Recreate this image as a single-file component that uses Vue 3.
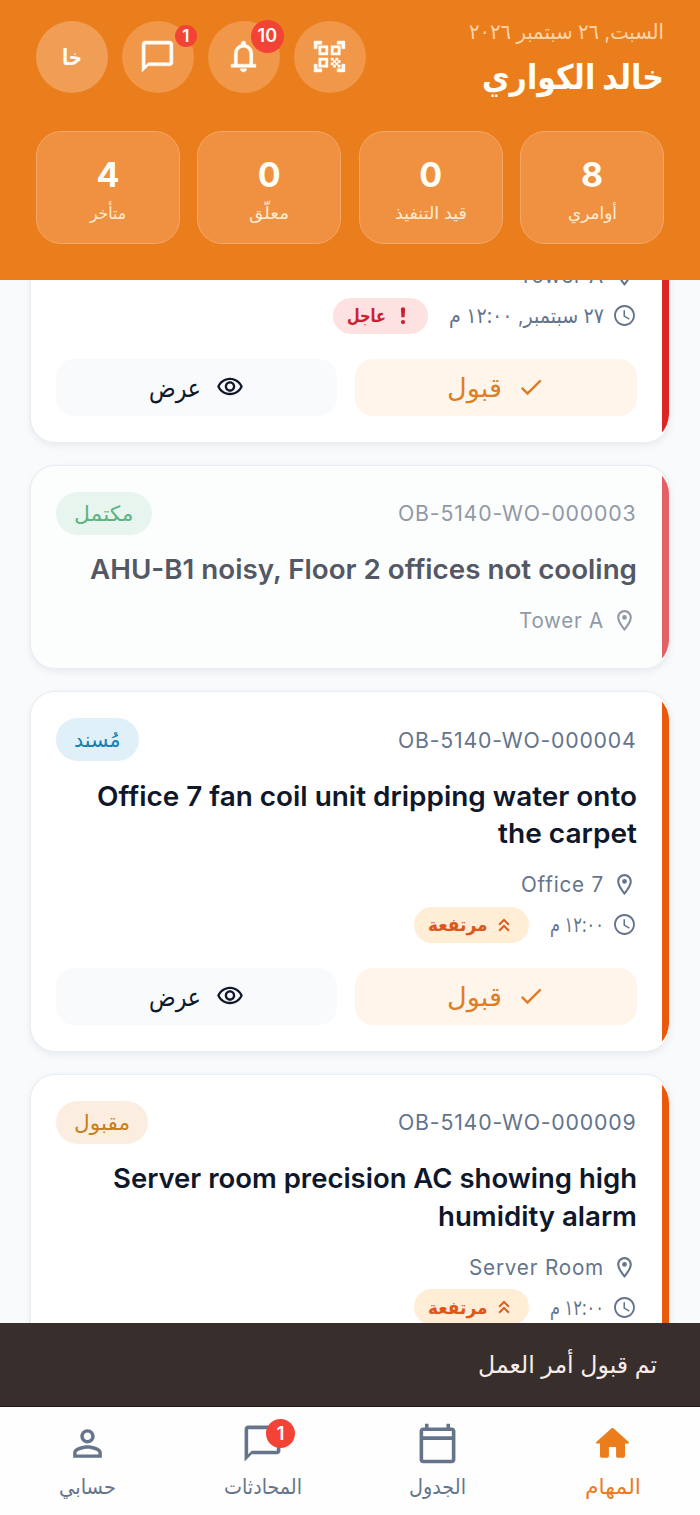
<script setup>
const icons = {
  qr: 'M9.5 6.5v3h-3v-3h3M11 5H5v6h6V5zm-1.5 9.5v3h-3v-3h3M11 13H5v6h6v-6zm6.5-6.5v3h-3v-3h3M19 5h-6v6h6V5zm-6 8h1.5v1.5H13V13zm1.5 1.5H16V16h-1.5v-1.5zM16 13h1.5v1.5H16V13zm-3 3h1.5v1.5H13V16zm1.5 1.5H16V19h-1.5v-1.5zM16 16h1.5v1.5H16V16zm1.5-1.5H19V16h-1.5v-1.5zm0 3H19V19h-1.5v-1.5zM22 7h-2V4h-3V2h5v5zm0 15v-5h-2v3h-3v2h5zM2 22h5v-2H4v-3H2v5zM2 2v5h2V4h3V2H2z',
  bell: 'M4 19v-2h2v-7q0-2.075 1.25-3.688T10.5 4.2v-.7q0-.625.438-1.062T12 2t1.063.438T13.5 3.5v.7q2 .5 3.25 2.113T18 10v7h2v2zm8 3q-.825 0-1.412-.587T10 20h4q0 .825-.587 1.413T12 22m-4-5h8v-7q0-1.65-1.175-2.825T12 6T9.175 7.175T8 10z',
  chat: 'M20 2H4c-1.1 0-2 .9-2 2v18l4-4h14c1.1 0 2-.9 2-2V4c0-1.1-.9-2-2-2zm0 14H6l-2 2V4h16v12z',
  pin: 'M12 2C8.13 2 5 5.13 5 9c0 5.25 7 13 7 13s7-7.75 7-13c0-3.87-3.13-7-7-7zM7 9c0-2.76 2.24-5 5-5s5 2.24 5 5c0 2.88-2.88 7.19-5 9.88C9.92 16.21 7 11.85 7 9zM12 6.7a2.3 2.3 0 1 0 0 4.6a2.3 2.3 0 1 0 0-4.6z',
  clock: 'M11.99 2C6.47 2 2 6.48 2 12s4.47 10 9.99 10C17.52 22 22 17.52 22 12S17.52 2 11.99 2zM12 20.2c-4.53 0-8.2-3.67-8.2-8.2S7.47 3.8 12 3.8s8.2 3.67 8.2 8.2-3.67 8.2-8.2 8.2zM12.5 7H11v6l5.25 3.15.75-1.23-4.5-2.67z',
  check: 'M9 16.17 4.83 12l-1.42 1.41L9 19 21 7l-1.41-1.41z',
  eye: 'M12 6c3.79 0 7.17 2.13 8.82 5.5C19.17 14.87 15.79 17 12 17s-7.17-2.13-8.82-5.5C4.83 8.13 8.21 6 12 6m0-2C7 4 2.73 7.11 1 11.5 2.73 15.89 7 19 12 19s9.27-3.11 11-7.5C21.27 7.11 17 4 12 4zm0 5c1.38 0 2.5 1.12 2.5 2.5S13.38 14 12 14s-2.5-1.12-2.5-2.5S10.62 9 12 9m0-2c-2.48 0-4.5 2.02-4.5 4.5S9.52 16 12 16s4.5-2.02 4.5-4.5S14.48 7 12 7z',
  urgent: 'M12 2.5c-1.4 0-2.4 1-2.3 2.3l.6 8.6h3.4l.6-8.6c.1-1.3-.9-2.3-2.3-2.3zM12 16.3a2.3 2.3 0 1 0 0 4.6a2.3 2.3 0 1 0 0-4.6z',
  high: 'M6 17.59 7.41 19 12 14.42 16.59 19 18 17.59l-6-6zM6 11l1.41 1.41L12 7.83l4.59 4.58L18 11l-6-6z',
  home: 'M10 19v-5h4v5c0 .55.45 1 1 1h3c.55 0 1-.45 1-1v-7h1.7c.46 0 .68-.57.33-.87L12.67 3.6c-.38-.34-.96-.34-1.34 0l-8.36 7.53c-.34.3-.13.87.33.87H5v7c0 .55.45 1 1 1h3c.55 0 1-.45 1-1z',
  calendar: 'M20 3h-1V1h-2v2H7V1H5v2H4c-1.1 0-2 .9-2 2v16c0 1.1.9 2 2 2h16c1.1 0 2-.9 2-2V5c0-1.1-.9-2-2-2zm0 18H4V10h16v11zm0-13H4V5h16v3z',
  person: 'M12 5.9c1.16 0 2.1.94 2.1 2.1s-.94 2.1-2.1 2.1S9.9 9.16 9.9 8s.94-2.1 2.1-2.1m0 9c2.97 0 6.1 1.46 6.1 2.1v1.1H5.9V17c0-.64 3.13-2.1 6.1-2.1M12 4C9.79 4 8 5.79 8 8s1.79 4 4 4 4-1.79 4-4-1.79-4-4-4zm0 9c-2.67 0-8 1.34-8 4v3h16v-3c0-2.66-5.33-4-8-4z',
}

// Sets a one-line label to a fixed width by scaling it horizontally from its right edge.
const vFit = {
  mounted(el, { value }) {
    const natural = el.getBoundingClientRect().width
    el.style.width = value + 'px'
    el.style.transform = `scaleX(${value / natural})`
  },
}

const stats = [
  { value: '8', label: 'أوامري', w: 49 },
  { value: '0', label: 'قيد التنفيذ', w: 72 },
  { value: '0', label: 'معلّق', w: 40 },
  { value: '4', label: 'متأخر', w: 36 },
]

const orders = [
  {
    tone: 'red', place: 'Tower A', placeW: 85,
    time: '٢٧ سبتمبر, ١٢:٠٠ م', timeW: 155,
    priority: { icon: 'urgent', label: 'عاجل', w: 39 }, actions: true,
  },
  {
    tone: 'red', done: true, code: 'OB-5140-WO-000003', status: { kind: 'green', label: 'مكتمل', w: 59.5 },
    title: [{ text: 'AHU-B1 noisy, Floor 2 offices not cooling', w: 547 }],
    place: 'Tower A', placeW: 85,
  },
  {
    tone: 'orange', code: 'OB-5140-WO-000004', status: { kind: 'blue', label: 'مُسند', w: 46.5 },
    title: [{ text: 'Office 7 fan coil unit dripping water onto', w: 540 }, { text: 'the carpet', w: 139 }],
    place: 'Office 7', placeW: 83, time: '١٢:٠٠ م', timeW: 54,
    priority: { icon: 'high', label: 'مرتفعة', w: 59.5 }, actions: true,
  },
  {
    tone: 'orange', code: 'OB-5140-WO-000009', status: { kind: 'amber', label: 'مقبول', w: 56 },
    title: [{ text: 'Server room precision AC showing high', w: 524 }, { text: 'humidity alarm', w: 199 }],
    place: 'Server Room', placeW: 135, time: '١٢:٠٠ م', timeW: 54,
    priority: { icon: 'high', label: 'مرتفعة', w: 59.5 },
  },
]

const tabs = [
  { icon: 'home', label: 'المهام', w: 56, active: true },
  { icon: 'calendar', label: 'الجدول', w: 57 },
  { icon: 'chat', label: 'المحادثات', w: 78, badge: '1' },
  { icon: 'person', label: 'حسابي', w: 57 },
]
</script>

<template>
  <div class="app" dir="rtl">
    <header class="header">
      <div class="top">
        <div class="who">
          <div class="date"><span v-fit="195" class="fit">السبت, ٢٦ سبتمبر ٢٠٢٦</span></div>
          <div class="name"><span v-fit="182" class="fit">خالد الكواري</span></div>
        </div>
        <div class="tools">
          <div class="round bold"><svg viewBox="0 0 24 24"><path :d="icons.qr" /></svg></div>
          <div class="round bold">
            <svg viewBox="0 0 24 24"><path :d="icons.bell" /></svg>
            <b class="count big">10</b>
          </div>
          <div class="round bold">
            <svg viewBox="0 0 24 24"><path :d="icons.chat" /></svg>
            <b class="count small">1</b>
          </div>
          <div class="round avatar"><span v-fit="20" class="fit">خا</span></div>
        </div>
      </div>
      <div class="stats">
        <div v-for="s in stats" :key="s.label" class="stat">
          <b>{{ s.value }}</b>
          <div class="stat-label"><span v-fit="s.w" class="fit">{{ s.label }}</span></div>
        </div>
      </div>
    </header>

    <main class="list">
      <article v-for="(o, i) in orders" :key="i" class="card" :class="[o.tone, { done: o.done, cut: !o.code }]">
        <div v-if="o.code" class="head">
          <span class="code"><span v-fit="238.5" class="fit">{{ o.code }}</span></span>
          <span class="status" :class="o.status.kind"><span v-fit="o.status.w" class="fit">{{ o.status.label }}</span></span>
        </div>
        <h2 v-if="o.title" class="title">
          <div v-for="l in o.title" :key="l.text" class="line"><span v-fit="l.w" class="fit">{{ l.text }}</span></div>
        </h2>
        <div class="place">
          <svg viewBox="0 0 24 24"><path :d="icons.pin" /></svg>
          <span v-fit="o.placeW" class="fit">{{ o.place }}</span>
        </div>
        <div v-if="o.time" class="when">
          <svg viewBox="0 0 24 24"><path :d="icons.clock" /></svg>
          <span v-fit="o.timeW" class="fit">{{ o.time }}</span>
          <span class="priority" :class="o.priority.icon">
            <svg viewBox="0 0 24 24"><path :d="icons[o.priority.icon]" /></svg>
            <span v-fit="o.priority.w" class="fit">{{ o.priority.label }}</span>
          </span>
        </div>
        <div v-if="o.actions" class="actions">
          <div class="btn accept">
            <svg viewBox="0 0 24 24"><path :d="icons.check" /></svg>
            <span v-fit="55" class="fit">قبول</span>
          </div>
          <div class="btn view">
            <svg viewBox="0 0 24 24"><path :d="icons.eye" /></svg>
            <span v-fit="52" class="fit">عرض</span>
          </div>
        </div>
      </article>
    </main>

    <div class="snack"><span v-fit="179" class="fit">تم قبول أمر العمل</span></div>

    <nav class="nav">
      <div v-for="t in tabs" :key="t.label" class="tab" :class="{ active: t.active }">
        <div class="tab-icon">
          <svg viewBox="0 0 24 24"><path :d="icons[t.icon]" /></svg>
          <b v-if="t.badge" class="count">{{ t.badge }}</b>
        </div>
        <div class="tab-label"><span v-fit="t.w" class="fit">{{ t.label }}</span></div>
      </div>
    </nav>
  </div>
</template>

<style>
body { margin: 0; }
</style>

<style scoped>
.app {
  width: 700px;
  height: 1515px;
  overflow: hidden;
  display: flex;
  flex-direction: column;
  background: #f8fafc;
  color: #0f172a;
  font-family: Inter, "DejaVu Sans", sans-serif;
}
.app * { box-sizing: border-box; }
svg { display: block; flex: none; fill: currentColor; }
.fit { display: inline-block; flex: none; white-space: nowrap; transform-origin: 100% 50%; text-align: right; }

.header { flex: none; height: 280px; padding: 20.5px 36px 0; background: #eb7e1c; color: #fffdf8; }
.top { display: flex; justify-content: space-between; height: 110.5px; }
.date { height: 22px; line-height: 22px; font-size: 21px; color: #fad4a9; }
.name { height: 44px; margin-top: 12px; line-height: 44px; font-size: 34px; font-weight: 700; }
.tools { display: flex; gap: 14.2px; }
.round {
  position: relative; width: 71.8px; height: 72px; border-radius: 50%;
  display: flex; align-items: center; justify-content: center; background: #f0974a;
}
.round svg { width: 37px; height: 37px; }
.bold path { stroke: currentColor; stroke-width: 0.35; }
.avatar { background: #f09e55; font-size: 22px; font-weight: 700; }
.count {
  position: absolute; display: flex; align-items: center; justify-content: center;
  border-radius: 50%; background: #f34236; color: #fffafa; font-weight: 600; line-height: 1;
}
.count.small { width: 22px; height: 22px; top: 4.5px; right: -3px; font-size: 17px; }
.count.big { width: 33px; height: 33px; top: -1px; right: -4px; font-size: 18px; }

.stats { display: grid; grid-template-columns: repeat(4, 1fr); gap: 17.5px; }
.stat {
  height: 113px; padding-top: 22px; border: 1.5px solid #f4a767; border-radius: 25px;
  background: #ef9140; text-align: center;
}
.stat b { display: block; height: 42px; line-height: 42px; font-size: 34px; font-weight: 700; }
.stat-label { height: 30px; margin-top: 2px; line-height: 30px; font-size: 17px; color: #fdecd6; }

.list { height: 1043px; flex: none; overflow: hidden; display: flex; flex-direction: column; gap: 24px; padding: 0 31px; }
.card {
  position: relative; flex: none; overflow: hidden; padding: 26px 32.5px 26px 25px; border-radius: 24px;
  background: #fff;
  box-shadow: 0 0 0 1.2px #eaedf1, 0 3px 9px rgba(30, 41, 59, 0.08);
}
.card::before {
  content: ""; position: absolute; inset: 0; border-radius: 28px; pointer-events: none;
  background: linear-gradient(to left, #dc2626 7.5px, transparent 7.5px);
}
.card.orange::before { background: linear-gradient(to left, #ea580c 7.5px, transparent 7.5px); }
.card.cut { margin-top: -45px; }
.card.cut::before { border-radius: 0 0 28px 0; }
.card.done { background: #fcfefd; }
.card.done::before { background: linear-gradient(to left, #e26265 7.5px, transparent 7.5px); }
.card.done .title { color: #545864; }
.card.done .code, .card.done .place { color: #9299a6; }

.head { display: flex; align-items: center; justify-content: space-between; height: 43px; }
.code { font-size: 21.3px; letter-spacing: 0.8px; color: #64748b; }
.status { display: flex; align-items: center; height: 43px; padding: 0 18px; border-radius: 22px; font-size: 21px; }
.green { background: #e8f4ee; color: #5bb583; }
.blue { background: #e0f0f9; color: #1180b5; }
.amber { background: #fbeee0; color: #c97f1c; }
.title { margin: 16.5px 0 0; font-size: 27.5px; font-weight: 600; }
.line { height: 37.6px; line-height: 37px; }
.place { display: flex; align-items: center; height: 28.5px; margin: 17.3px 0 8px; font-size: 21px; letter-spacing: 0.8px; color: #64748b; }
.cut .place { margin-top: 0; }
.place svg, .when > svg { width: 25px; height: 25px; margin-left: 7.5px; }
.when { display: flex; align-items: center; height: 36px; font-size: 21px; color: #64748b; }
.priority { display: flex; align-items: center; height: 36px; margin-right: 21px; padding: 0 14px; border-radius: 18px; font-size: 18px; font-weight: 700; }
.priority svg { width: 22px; height: 22px; margin-left: 6px; }
.priority.urgent { background: #fee2e2; color: #cc2030; }
.priority.high { background: #ffedd5; color: #e0561a; }
.actions { display: grid; grid-template-columns: 1fr 1fr; gap: 18px; margin-top: 25px; }
.btn { display: flex; align-items: center; justify-content: center; height: 57px; border-radius: 18px; font-size: 26px; }
.btn svg { width: 28px; height: 28px; margin-left: 15px; }
.accept { background: #fff5eb; color: #e07d22; }
.view { background: #f8fafc; color: #0f172a; }

.snack {
  position: relative; flex: none; display: flex; align-items: center; height: 84px; padding-right: 43px;
  background: #382e2b; border-bottom: 1px solid #241a17; color: #f8ece8; font-size: 24px;
}
.nav { flex: 1; display: grid; grid-template-columns: repeat(4, 1fr); background: #fefefe; }
.tab { display: flex; flex-direction: column; align-items: center; padding-top: 15px; color: #64748b; }
.tab.active { color: #ec7d1c; }
.tab-icon { position: relative; }
.tab-icon svg { width: 43px; height: 43px; }
.tab-icon .count { width: 29px; height: 29px; top: -3px; right: -11px; font-size: 19px; }
.tab-label { height: 28px; margin-top: 8px; line-height: 28px; font-size: 21px; }
</style>
